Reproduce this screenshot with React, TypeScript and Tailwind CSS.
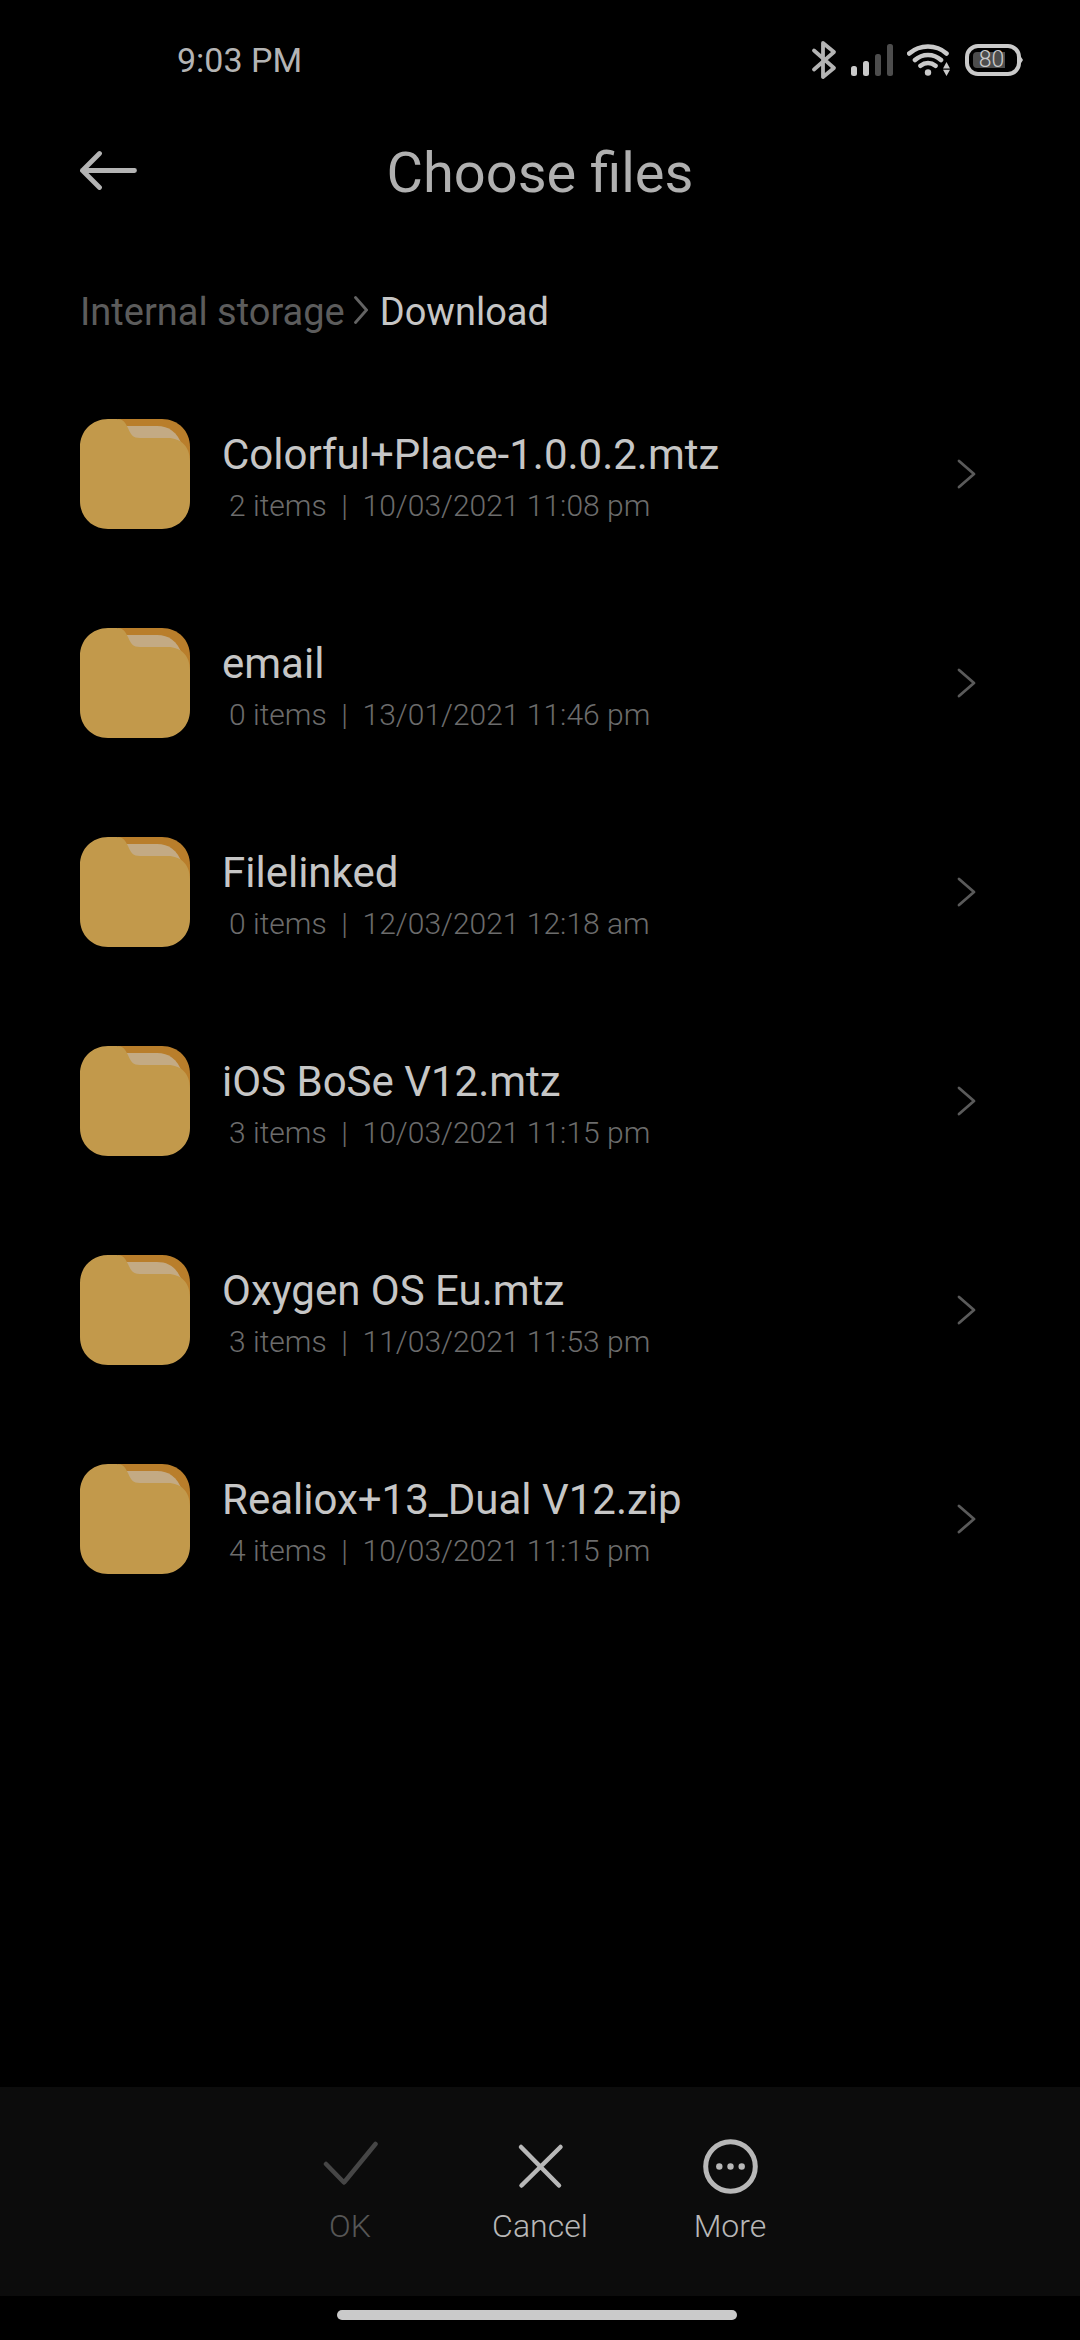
import type { ReactNode } from "react";

interface Folder {
  name: string;
  items: number;
  date: string;
}

const folders: Folder[] = [
  { name: "Colorful+Place-1.0.0.2.mtz", items: 2, date: "10/03/2021 11:08 pm" },
  { name: "email", items: 0, date: "13/01/2021 11:46 pm" },
  { name: "Filelinked", items: 0, date: "12/03/2021 12:18 am" },
  { name: "iOS BoSe V12.mtz", items: 3, date: "10/03/2021 11:15 pm" },
  { name: "Oxygen OS Eu.mtz", items: 3, date: "11/03/2021 11:53 pm" },
  { name: "Realiox+13_Dual V12.zip", items: 4, date: "10/03/2021 11:15 pm" },
];

const App = () => {
  return (
    <div className="flex min-h-screen flex-col bg-black font-['Roboto',sans-serif] text-[#c6c6c6]">
      <StatusBar />

      <header className="grid h-[100px] grid-cols-[1fr_auto_1fr] items-center px-20">
        <button aria-label="Back" className="justify-self-start">
          <BackIcon />
        </button>
        <h1 className="pt-[6px] text-[56px] leading-[72px] font-normal text-[#b0b0b0]">Choose files</h1>
      </header>

      <nav aria-label="Breadcrumb" className="flex h-[149px] items-center px-20 pt-[34px]">
        <a href="#storage" className="text-[38px] leading-[48px] text-[#5c5c5c]">
          Internal storage
        </a>
        <svg width="14" height="28" viewBox="0 0 14 28" fill="none" className="mr-[12px] mb-[4px] ml-[9px]">
          <path d="M1.5 1.5 12.5 14 1.5 26.5" stroke="#636363" strokeWidth="2.8" strokeLinecap="round" />
        </svg>
        <a href="#download" aria-current="page" className="text-[38px] leading-[48px]">
          Download
        </a>
      </nav>

      <main className="flex-1">
        <ul>
          {folders.map((folder) => (
            <FolderRow key={folder.name} folder={folder} />
          ))}
        </ul>
      </main>

      {/* Bottom actions */}
      <footer>
        <div className="flex h-[209px] justify-center bg-[#0c0c0c] pt-[52px]">
          <Action label="OK" disabled>
            <path d="M3 25 21 43.5 52.5 5" stroke="#464646" strokeWidth="4.5" strokeLinecap="round" strokeLinejoin="round" />
          </Action>
          <Action label="Cancel">
            <path d="M8 8 46 46.5M47.5 8 8.5 46.5" stroke="currentColor" strokeWidth="4.5" strokeLinecap="round" />
          </Action>
          <Action label="More">
            <circle cx="27.5" cy="27.5" r="24.8" stroke="currentColor" strokeWidth="5" />
            <circle cx="16.3" cy="27.5" r="3.2" fill="currentColor" />
            <circle cx="27.5" cy="27.5" r="3.2" fill="currentColor" />
            <circle cx="38.7" cy="27.5" r="3.2" fill="currentColor" />
          </Action>
        </div>
        <div className="flex h-[44px] justify-center pt-[14px] pr-[6px]">
          <div className="h-[10px] w-[400px] rounded-full bg-[#cacaca]" />
        </div>
      </footer>
    </div>
  );
};

const FolderRow = ({ folder }: { folder: Folder }) => (
  <li>
    <a href="#folder" className="flex h-[209px] items-center pr-[104px] pl-20">
      <FolderIcon />
      <div className="ml-[32px] flex-1 pt-[8px]">
        <p className="text-[42px] leading-[56px]">{folder.name}</p>
        <p className="pl-[7px] text-[30px] leading-[46px] font-light whitespace-pre text-[#6c6c6c]">
          {`${folder.items} items  |  ${folder.date}`}
        </p>
      </div>
      <svg width="19" height="30" viewBox="0 0 19 30" fill="none">
        <path d="M2 2 17 15 2 28" stroke="#5a5a5a" strokeWidth="2.8" strokeLinecap="round" strokeLinejoin="round" />
      </svg>
    </a>
  </li>
);

interface ActionProps {
  label: string;
  disabled?: boolean;
  children: ReactNode;
}

const Action = ({ label, disabled, children }: ActionProps) => (
  <button
    disabled={disabled}
    className="flex w-[190px] flex-col items-center text-[#b8b8b8] disabled:text-[#565656]"
  >
    <svg width="55" height="55" viewBox="0 0 55 55" fill="none">
      {children}
    </svg>
    <span className="mt-[12px] text-[32px] leading-[40px] font-light">{label}</span>
  </button>
);

const StatusBar = () => (
  <div className="flex h-[120px] items-center justify-between pr-[57px] pl-[177px] text-[#b4b4b4]">
    <span className="text-[34px] leading-[40px]">9:03 PM</span>
    <div className="flex items-center">
      <svg width="26" height="40" viewBox="0 0 26 40" fill="none" stroke="currentColor" strokeWidth="3.8" strokeLinecap="round" strokeLinejoin="round">
        <path d="M3 10.5 23 28 12 37V3L23 12 3 29.5" />
      </svg>
      <svg width="42" height="32" viewBox="0 0 42 32" className="ml-[14px]">
        <rect x="0" y="22" width="6" height="10" rx="2.5" fill="#cacaca" />
        <rect x="12" y="17" width="6" height="15" rx="2.5" fill="#cacaca" />
        <rect x="24" y="10" width="6" height="22" rx="2.5" fill="#4d4d4d" />
        <rect x="36" y="0" width="6" height="32" rx="2.5" fill="#4d4d4d" />
      </svg>
      <svg width="43" height="32" viewBox="0 0 43 32" fill="none" className="ml-[14px]">
        <path d="M2.2 9.5C13 .2 29 .2 39.5 9.5M8 16C15.5 9.3 26.5 9.3 34 16M13.5 21.8C18 18.2 24 18.2 28.5 21.8" stroke="#cacaca" strokeWidth="4.6" strokeLinecap="round" />
        <circle cx="21" cy="28.5" r="3.2" fill="#cacaca" />
        <path d="M39.5 18 43 24.5H36ZM39.5 32 43 25.8H36Z" fill="#cacaca" />
      </svg>
      <div className="relative ml-[15px] flex h-[32px] w-[58px] items-center">
        <svg width="58" height="32" viewBox="0 0 58 32" fill="none">
          <rect x="2" y="2" width="52" height="28" rx="11" stroke="#cacaca" strokeWidth="4" />
          <path d="M54.5 10.5 58 16 54.5 21.5Z" fill="#cacaca" />
          <path d="M40 8V24H12Q8 24 8 20V12Q8 8 12 8Z" fill="#4d4d4d" />
        </svg>
        <span className="absolute inset-0 pr-[5px] text-center text-[23px] leading-[32px] font-light text-[#cacaca]">80</span>
      </div>
    </div>
  </div>
);

const BackIcon = () => (
  <svg width="58" height="40" viewBox="0 0 58 40" fill="none" stroke="#b4b4b4" strokeWidth="4.8" strokeLinecap="round" strokeLinejoin="round">
    <path d="M54.5 20.500H2.500M19.500 3.500 2.500 20.500 19.500 37.500" />
  </svg>
);

const FolderIcon = () => (
  <svg width="110" height="110" viewBox="0 0 110 110">
    <path d="M38 0H82C98 0 110 12 110 28V60H38Z" fill="#b97e2b" />
    <path d="M44 7H77C89 7 97 13 102 26L90 40H50Z" fill="#c3aa84" />
    <path d="M28 0H37C43 0 45 3 48 9C51 16 53 19 60 19H88C101 19 110 28 110 42V82C110 98 98 110 82 110H28C12 110 0 98 0 82V28C0 12 12 0 28 0Z" fill="#c2994b" />
  </svg>
);

export default App;
